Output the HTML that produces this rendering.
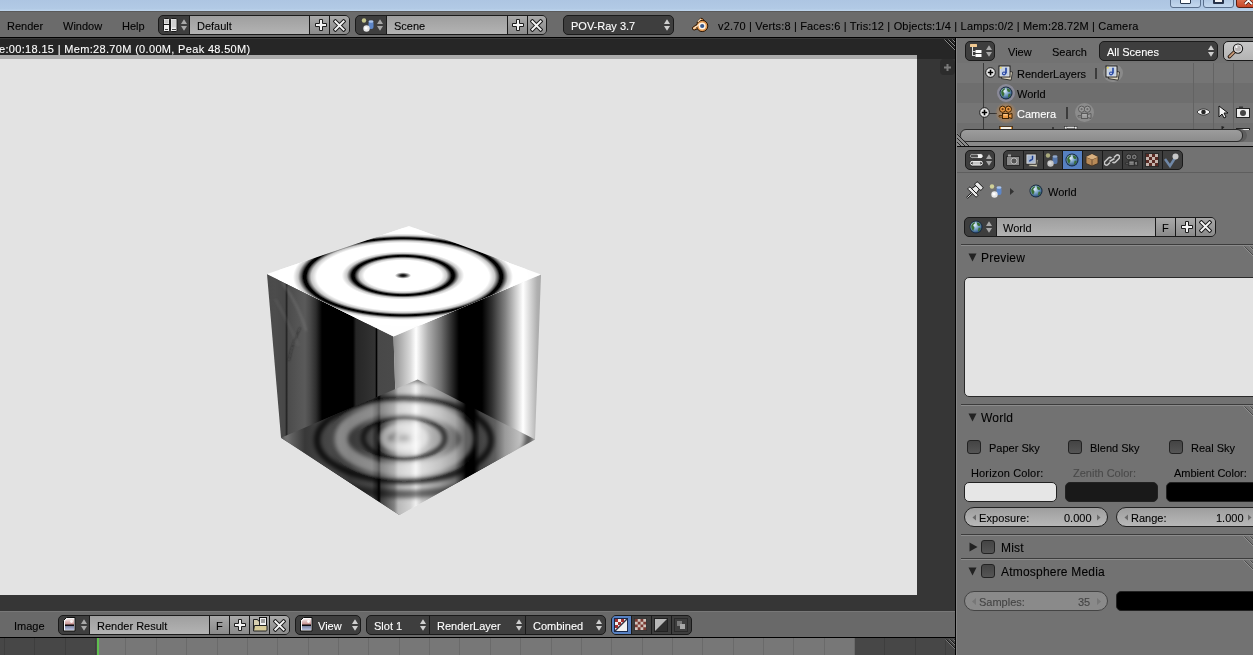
<!DOCTYPE html>
<html><head><meta charset="utf-8">
<style>
*{box-sizing:border-box;margin:0;padding:0}
html,body{width:1253px;height:655px;overflow:hidden;background:#6c6c6c}
body{position:relative;font-family:"Liberation Sans",sans-serif;font-size:11px;color:#000}
.a{position:absolute}
.t{position:absolute;height:20px;line-height:20px;font-size:11px;white-space:pre;-webkit-text-stroke:0.1px currentColor;will-change:transform}
.w{color:#fff}
.dd{position:absolute;border:1px solid #1e1e1e;border-radius:4px;background:#3f3f3f}
.tf{position:absolute;background:linear-gradient(#a2a2a2,#b9b9b9);border-top:1px solid #1e1e1e;border-bottom:1px solid #1e1e1e}
.tb{position:absolute;background:linear-gradient(#9a9a9a,#858585);border:1px solid #1e1e1e}

.grp{position:absolute;border:1px solid #1a1a1a;border-radius:5px;overflow:hidden;background:#3e3e3e}
.grp>div{position:absolute;top:0;bottom:0}
.sf{background:linear-gradient(#9f9f9f,#b3b3b3);border-left:1px solid #1a1a1a}
.sb{background:linear-gradient(#a9a9a9,#8a8a8a);border-left:1px solid #1a1a1a}
.sd{border-left:1px solid #1a1a1a}
.ico{position:absolute}
.arr{position:absolute;width:6px;height:13px}
</style></head><body>
<svg width="0" height="0" style="position:absolute">
<defs>
<path id="plus" d="M4.5 0.5h3v4h4v3h-4v4h-3v-4h-4v-3h4z" fill="#f4f4f4" stroke="#1c1c1c" stroke-width="1"/>
<g id="xx"><path d="M2.4 2.4L10.6 10.6M10.6 2.4L2.4 10.6" stroke="#1c1c1c" stroke-width="4" stroke-linecap="square"/><path d="M2.4 2.4L10.6 10.6M10.6 2.4L2.4 10.6" stroke="#f4f4f4" stroke-width="2" stroke-linecap="square"/></g>
<g id="ud"><path d="M3 0.2L6 5H0z" fill="#a8a8a8"/><path d="M0 7H6L3 11.8z" fill="#a8a8a8"/></g>
<g id="ud2"><path d="M3 0.2L6 5H0z" fill="#cfcfcf"/><path d="M0 7H6L3 11.8z" fill="#cfcfcf"/></g>
<radialGradient id="gGlobe" cx="0.38" cy="0.32" r="0.7"><stop offset="0" stop-color="#e4f0fa"/><stop offset="0.5" stop-color="#80a8cc"/><stop offset="1" stop-color="#2e5482"/></radialGradient>
<g id="globe"><circle cx="7" cy="7" r="6.5" fill="#17283c"/><circle cx="7" cy="7" r="5.6" fill="url(#gGlobe)"/><path d="M2.2 5.5c.8-1.8 2.2-3 3.6-3.2.6.6 0 1.6-.8 2-.9.5-1 1.5-.2 2.2.8.7.9 1.8.1 2.8-.4.5-.6 1.2-.6 1.8C3 10 2 7.8 2.2 5.5zM7.6 2.2c1.8.1 3.3 1.1 4 2.6-.2.9-1 1.2-1.8 1.2-.9-.1-1.5-.6-1.6-1.4 0-.7-.4-1.4-.6-2.4zM9.6 7.8c.9-.3 1.9.1 2.1.8-.3 1.4-1.1 2.5-2.2 3.1-.6-.4-.5-1.2-.3-1.9.2-.6.1-1.4.4-2z" fill="#3a6e36"/></g>
<linearGradient id="gImg" x1="0" y1="0" x2="0" y2="1"><stop offset="0" stop-color="#f4e8e8"/><stop offset="0.48" stop-color="#c89090"/><stop offset="0.52" stop-color="#100808"/><stop offset="0.6" stop-color="#101018"/><stop offset="0.68" stop-color="#8088a8"/><stop offset="1" stop-color="#b8c0dc"/></linearGradient>
<g id="imgico"><path d="M3.5 0.5h8.5v13.5H0.5V3.5z" fill="#f8f8f8" stroke="#111"/><path d="M4 2h7v11H2V4z" fill="url(#gImg)"/><circle cx="8.5" cy="4.5" r="1.4" fill="#fff" opacity="0.85"/></g>
<g id="scn"><circle cx="3" cy="2.5" r="2.2" fill="#e8e8a0" opacity="0.8"/><rect x="7.5" y="3" width="5" height="8" rx="2" fill="#5d86c8"/><ellipse cx="10" cy="3.5" rx="2.5" ry="1.2" fill="#a8c4ee"/><circle cx="5.5" cy="10.5" r="3.2" fill="#e6e6e6"/><circle cx="5" cy="10" r="1.6" fill="#fff"/></g>
</defs></svg>


<!-- title bar -->
<div class="a" style="left:0;top:0;width:1253px;height:11px;background:linear-gradient(#adc5e2,#b2cae5 80%,#c0d6ee)"></div>

<!-- top header -->
<div class="a" style="left:0;top:11px;width:1253px;height:26px;background:#6b6b6b;border-top:1px solid #5a5a5a"></div>
<div class="a" style="left:0;top:37px;width:1253px;height:1px;background:#000"></div>
<div class="t" style="left:7px;top:16px">Render</div>
<div class="t" style="left:63px;top:16px">Window</div>
<div class="t" style="left:122px;top:16px">Help</div>


<!-- layout widget -->
<div class="grp" style="left:158px;top:15px;width:192px;height:20px">
 <div class="sf" style="left:30px;width:121px"></div>
 <div class="sb" style="left:150px;width:21px"></div>
 <div class="sb" style="left:170px;width:21px"></div>
</div>
<svg class="ico" style="left:163px;top:18px" width="15" height="14"><rect x="0.5" y="0.5" width="6" height="13" rx="1" fill="#f0f0f0" stroke="#1a1a1a"/><rect x="7.5" y="0.5" width="6.5" height="13" rx="1" fill="#f0f0f0" stroke="#1a1a1a"/><path d="M0.5 6.5h6" stroke="#1a1a1a"/><rect x="1.5" y="1.5" width="4" height="4" fill="#c8c8c8"/><rect x="8.5" y="1.5" width="4.5" height="8" fill="#d0d0d0"/><rect x="2" y="11" width="3" height="1" fill="#444"/><rect x="9" y="11" width="4" height="1" fill="#444"/></svg>
<svg class="arr" style="left:181px;top:19px"><use href="#ud"/></svg>
<div class="t" style="left:197px;top:16px">Default</div>
<svg class="ico" style="left:315px;top:19px" width="12" height="12"><use href="#plus"/></svg>
<svg class="ico" style="left:333px;top:19px" width="13" height="13"><use href="#xx"/></svg>

<!-- scene widget -->
<div class="grp" style="left:355px;top:15px;width:192px;height:20px">
 <div class="sf" style="left:30px;width:122px"></div>
 <div class="sb" style="left:151px;width:21px"></div>
 <div class="sb" style="left:171px;width:21px"></div>
</div>
<svg class="ico" style="left:361px;top:18px" width="14" height="14"><use href="#scn"/></svg>
<svg class="arr" style="left:377px;top:19px"><use href="#ud"/></svg>
<div class="t" style="left:394px;top:16px">Scene</div>
<svg class="ico" style="left:512px;top:19px" width="12" height="12"><use href="#plus"/></svg>
<svg class="ico" style="left:530px;top:19px" width="13" height="13"><use href="#xx"/></svg>

<!-- render engine -->
<div class="grp" style="left:563px;top:15px;width:111px;height:20px"></div>
<div class="t w" style="left:571px;top:16px">POV-Ray 3.7</div>
<svg class="arr" style="left:664px;top:19px"><use href="#ud2"/></svg>

<!-- blender logo -->
<svg class="ico" style="left:691px;top:17px" width="19" height="16" viewBox="0 0 19 16"><g stroke="#2a1606" stroke-width="1" stroke-linejoin="round" fill="#e49a52"><path d="M5.8 5.2L9.6 1.2 11.6 1.6 13.8 4.6z"/><path d="M9.6 4.6L1.4 10.6 1.8 12.6 3.4 13 10.4 10.4z"/><circle cx="11.2" cy="9" r="5.6"/></g><path d="M6.8 4.9L9.9 1.9M2.4 11.8L9.2 6.4" stroke="#fde2c0" stroke-width="1.3"/><circle cx="11.2" cy="9" r="3.5" fill="#fff6ea"/><circle cx="11.2" cy="9" r="2.1" fill="#3a5a8e"/></svg>
<div class="t" style="left:718px;top:16px;letter-spacing:0.17px">v2.70 | Verts:8 | Faces:6 | Tris:12 | Objects:1/4 | Lamps:0/2 | Mem:28.72M | Camera</div>

<!-- window buttons -->
<div class="a" style="left:1170px;top:-4px;width:31px;height:12px;border:1px solid #5a6f8c;border-radius:3px;background:linear-gradient(#a9c1de,#c4d8ee)"></div>
<div class="a" style="left:1180px;top:-2px;width:11px;height:6px;border:1px solid #2a3a50;border-radius:1px;background:#fff"></div>
<div class="a" style="left:1203px;top:-4px;width:31px;height:12px;border:1px solid #5a6f8c;border-radius:3px;background:linear-gradient(#a9c1de,#c4d8ee)"></div>
<div class="a" style="left:1213px;top:-4px;width:11px;height:8px;border:2px solid #26324a;border-top-width:4px;border-radius:1px;background:#f4f4f4"></div>
<div class="a" style="left:1236px;top:-4px;width:30px;height:12px;border:1px solid #5a1e10;border-radius:3px;background:linear-gradient(#e07a5a,#c8482a)"></div>
<svg class="ico" style="left:1244px;top:-3px" width="9" height="9"><path d="M1 0L8 7M8 0L1 7" stroke="#4a1a10" stroke-width="3.2"/><path d="M1 0L8 7M8 0L1 7" stroke="#fff" stroke-width="1.8"/></svg>

<!-- image editor area -->
<div class="a" style="left:0;top:38px;width:955px;height:573px;background:#363636"></div>
<div class="a" style="left:0;top:38px;width:955px;height:21px;background:#262626"></div>
<div class="a" style="left:0;top:59px;width:917px;height:536px;background:#e3e3e3"></div>
<div class="a" style="left:0;top:55px;width:917px;height:4px;background:#ababab"></div>
<div class="t w" style="left:-1px;top:39px;letter-spacing:0.33px">e:00:18.15 | Mem:28.70M (0.00M, Peak 48.50M)</div>


<!-- cube -->
<svg class="a" style="left:250px;top:215px" width="300" height="310" viewBox="250 215 300 310">
<defs>
<linearGradient id="gL" gradientUnits="userSpaceOnUse" x1="267" y1="0" x2="393.5" y2="0"><stop offset="0.000" stop-color="#4a4a4a"/><stop offset="0.063" stop-color="#4c4c4c"/><stop offset="0.142" stop-color="#474747"/><stop offset="0.154" stop-color="#262626"/><stop offset="0.170" stop-color="#4c4c4c"/><stop offset="0.245" stop-color="#555"/><stop offset="0.300" stop-color="#5a5a5a"/><stop offset="0.340" stop-color="#4a4a4a"/><stop offset="0.387" stop-color="#2e2e2e"/><stop offset="0.435" stop-color="#000"/><stop offset="0.680" stop-color="#000"/><stop offset="0.704" stop-color="#262626"/><stop offset="0.854" stop-color="#333"/><stop offset="0.866" stop-color="#000"/><stop offset="0.877" stop-color="#484848"/><stop offset="1.000" stop-color="#4a4a4a"/></linearGradient>
<linearGradient id="gR" gradientUnits="userSpaceOnUse" x1="393.5" y1="0" x2="541" y2="0"><stop offset="0.000" stop-color="#909090"/><stop offset="0.112" stop-color="#d8d8d8"/><stop offset="0.153" stop-color="#fff"/><stop offset="0.234" stop-color="#b0b0b0"/><stop offset="0.322" stop-color="#707070"/><stop offset="0.390" stop-color="#303030"/><stop offset="0.444" stop-color="#000"/><stop offset="0.600" stop-color="#000"/><stop offset="0.668" stop-color="#303030"/><stop offset="0.756" stop-color="#808080"/><stop offset="0.824" stop-color="#c8c8c8"/><stop offset="0.878" stop-color="#fff"/><stop offset="0.973" stop-color="#b0b0b0"/><stop offset="1.000" stop-color="#a8a8a8"/></linearGradient>
<filter id="b1" x="-20%" y="-20%" width="140%" height="140%"><feGaussianBlur stdDeviation="1.1"/></filter>
<filter id="b2" x="-20%" y="-20%" width="140%" height="140%"><feGaussianBlur stdDeviation="2"/></filter>
<filter id="b3" x="-20%" y="-20%" width="140%" height="140%"><feGaussianBlur stdDeviation="3"/></filter>
<radialGradient id="gTop" gradientUnits="userSpaceOnUse" cx="403" cy="276.8" r="125" gradientTransform="translate(0 276.8) scale(1 0.392) translate(0 -276.8)"><stop offset="0" stop-color="#fff"/><stop offset="0.69" stop-color="#fff"/><stop offset="0.735" stop-color="#c8c8c8"/><stop offset="0.762" stop-color="#505050"/><stop offset="0.776" stop-color="#000"/><stop offset="0.796" stop-color="#000"/><stop offset="0.812" stop-color="#505050"/><stop offset="0.84" stop-color="#c8c8c8"/><stop offset="0.88" stop-color="#fff"/><stop offset="1" stop-color="#fff"/></radialGradient>
<radialGradient id="gTopI" gradientUnits="userSpaceOnUse" cx="403" cy="275.5" r="62.5" gradientTransform="translate(0 275.5) scale(1 0.392) translate(0 -275.5)"><stop offset="0" stop-color="#0a0a0a"/><stop offset="0.035" stop-color="#1a1a1a"/><stop offset="0.08" stop-color="#8a8a8a"/><stop offset="0.13" stop-color="#fff"/><stop offset="0.62" stop-color="#fff"/><stop offset="0.7" stop-color="#c8c8c8"/><stop offset="0.75" stop-color="#505050"/><stop offset="0.78" stop-color="#000"/><stop offset="0.82" stop-color="#000"/><stop offset="0.85" stop-color="#505050"/><stop offset="0.9" stop-color="#c8c8c8"/><stop offset="0.98" stop-color="#fff"/><stop offset="1" stop-color="#fff"/></radialGradient>
<filter id="b07" x="-10%" y="-10%" width="120%" height="120%"><feGaussianBlur stdDeviation="0.7"/></filter>
<linearGradient id="gBot" gradientUnits="userSpaceOnUse" x1="281" y1="0" x2="535" y2="0"><stop offset="0.000" stop-color="#8a8a8a"/><stop offset="0.043" stop-color="#606060"/><stop offset="0.094" stop-color="#383838"/><stop offset="0.193" stop-color="#484848"/><stop offset="0.272" stop-color="#383838"/><stop offset="0.358" stop-color="#484848"/><stop offset="0.378" stop-color="#202020"/><stop offset="0.386" stop-color="#000"/><stop offset="0.394" stop-color="#404040"/><stop offset="0.445" stop-color="#808080"/><stop offset="0.461" stop-color="#b8b8b8"/><stop offset="0.508" stop-color="#d0d0d0"/><stop offset="0.531" stop-color="#f0f0f0"/><stop offset="0.555" stop-color="#c8c8c8"/><stop offset="0.626" stop-color="#a0a0a0"/><stop offset="0.685" stop-color="#707070"/><stop offset="0.717" stop-color="#202020"/><stop offset="0.728" stop-color="#000"/><stop offset="0.760" stop-color="#000"/><stop offset="0.783" stop-color="#404040"/><stop offset="0.843" stop-color="#606060"/><stop offset="0.882" stop-color="#9a9a9a"/><stop offset="0.941" stop-color="#c0c0c0"/><stop offset="1.000" stop-color="#b0b0b0"/></linearGradient>
<clipPath id="cLf"><path d="M267 274L393.5 336.5 399.4 515.1 281 437.7z"/></clipPath>
<clipPath id="cT"><path d="M409 226L541 274.5 393.5 336.5 267 274z"/></clipPath>
<clipPath id="cB"><path d="M281 437.7L417.7 379.5 535 439.4 399.4 515.1z"/></clipPath>
</defs>
<path d="M267 274L393.5 336.5 399.4 515.1 281 437.7z" fill="url(#gL)"/>
<path d="M393.5 336.5L541 274.5 535 439.4 399.4 515.1z" fill="url(#gR)"/>
<g clip-path="url(#cLf)" filter="url(#b1)" fill="none" stroke-linecap="round">
 <path d="M283 283C292 296 300 310 306 330" stroke="#808080" stroke-width="2.5" opacity="0.35"/>
 <path d="M276 300C284 315 292 330 298 345" stroke="#707070" stroke-width="2.2" opacity="0.3"/>
 <path d="M300 328C295 338 291 348 289 360" stroke="#1a1a1a" stroke-width="1.6" opacity="0.45"/>
</g>

<g clip-path="url(#cB)">
 <rect x="250" y="370" width="300" height="150" fill="url(#gBot)"/>
 <g filter="url(#b2)">
  <ellipse cx="404" cy="439" rx="63" ry="31" fill="none" stroke="#fff" stroke-width="13" opacity="0.38"/>
  <ellipse cx="404" cy="438" rx="20" ry="11" fill="none" stroke="#fff" stroke-width="9" opacity="0.5"/>
  <ellipse cx="404" cy="440" rx="87" ry="41" fill="none" stroke="#000" stroke-width="6" opacity="0.8"/>
  <ellipse cx="404" cy="438" rx="41" ry="21" fill="none" stroke="#000" stroke-width="4" opacity="0.85"/>
  <ellipse cx="406" cy="440" rx="14" ry="9" fill="#fff" opacity="0.35"/><ellipse cx="404" cy="438" rx="6" ry="3.5" fill="#666" opacity="0.3"/>
  <ellipse cx="404" cy="436" rx="125" ry="58" fill="none" stroke="#000" stroke-width="8" opacity="0.5"/>
 </g>
</g>
<g clip-path="url(#cT)">
 <rect x="250" y="215" width="300" height="130" fill="#fefefe"/>
 <g filter="url(#b07)"><ellipse cx="403" cy="276.8" rx="125" ry="49" fill="url(#gTop)"/><ellipse cx="403" cy="275.5" rx="62.5" ry="24.5" fill="url(#gTopI)"/></g>
</g>
</svg>

<div class="a" style="left:0;top:38px;width:955px;height:1px;background:#383838"></div>
<!-- image editor header -->
<div class="a" style="left:0;top:611px;width:955px;height:26px;background:#696969;border-top:1px solid #787878"></div>
<div class="a" style="left:0;top:637px;width:955px;height:1px;background:#000"></div>
<div class="t" style="left:14px;top:616px">Image</div>

<!-- timeline -->
<div class="a" style="left:0;top:638px;width:955px;height:17px;background:#474747"></div>
<div class="a" style="left:97px;top:638px;width:757px;height:17px;background:#777777"></div>
<div class="a" style="left:97px;top:638px;width:2px;height:17px;background:#5fbf4f"></div>


<!-- image header widgets -->
<div class="grp" style="left:58px;top:615px;width:232px;height:20px">
 <div class="sf" style="left:30px;width:121px"></div>
 <div class="sb" style="left:150px;width:21px"></div>
 <div class="sb" style="left:170px;width:21px"></div>
 <div class="sb" style="left:190px;width:21px"></div>
 <div class="sb" style="left:210px;width:21px"></div>
</div>
<svg class="ico" style="left:63px;top:617px" width="14" height="16"><use href="#imgico"/></svg>
<svg class="arr" style="left:81px;top:619px"><use href="#ud"/></svg>
<div class="t" style="left:97px;top:616px">Render Result</div>
<div class="t" style="left:216px;top:616px">F</div>
<svg class="ico" style="left:234px;top:619px" width="12" height="12"><use href="#plus"/></svg>
<svg class="ico" style="left:252px;top:617px" width="16" height="15" viewBox="0 0 16 15"><rect x="7.5" y="0.5" width="7" height="8" fill="#f0f0f0" stroke="#111"/><path d="M9 3h4M9 5h4" stroke="#444"/><path d="M1.5 2.5h4l1 1.5h1v9h-6z" fill="#d8d0b0" stroke="#222"/><path d="M2.5 8.5h12.5v4.5c0 .6-.4 1-1 1h-12.5z" fill="#d8cc98" stroke="#222"/></svg>
<svg class="ico" style="left:273px;top:619px" width="13" height="13"><use href="#xx"/></svg>

<div class="grp" style="left:295px;top:615px;width:66px;height:20px"></div>
<svg class="ico" style="left:300px;top:617px" width="14" height="16"><use href="#imgico"/></svg>
<div class="t w" style="left:318px;top:616px">View</div>
<svg class="arr" style="left:352px;top:619px"><use href="#ud2"/></svg>

<div class="grp" style="left:366px;top:615px;width:240px;height:20px">
 <div class="sd" style="left:62px;width:97px"></div>
 <div class="sd" style="left:158px;width:81px"></div>
</div>
<div class="t w" style="left:374px;top:616px">Slot 1</div>
<svg class="arr" style="left:420px;top:619px"><use href="#ud2"/></svg>
<div class="t w" style="left:437px;top:616px">RenderLayer</div>
<svg class="arr" style="left:516px;top:619px"><use href="#ud2"/></svg>
<div class="t w" style="left:533px;top:616px">Combined</div>
<svg class="arr" style="left:596px;top:619px"><use href="#ud2"/></svg>

<div class="grp" style="left:611px;top:615px;width:81px;height:20px">
 <div style="left:0;width:20px;background:#5680c2"></div>
 <div class="sd" style="left:19px;width:21px"></div>
 <div class="sd" style="left:39px;width:21px"></div>
 <div class="sd" style="left:59px;width:21px"></div>
</div>
<svg class="ico" style="left:614px;top:618px" width="14" height="14" viewBox="0 0 14 14"><rect x="0.5" y="0.5" width="13" height="13" fill="#f0f0f0" stroke="#1a2a4a"/><path d="M1 13L13 1" stroke="#334" stroke-width="1.5"/><path d="M1 1h3v3H1zM7 1h3v3H7zM4 4h3v3H4zM1 7h3v3H1z" fill="#a03030"/></svg>
<svg class="ico" style="left:634px;top:618px" width="13" height="13" viewBox="0 0 14 14"><rect x="0.5" y="0.5" width="13" height="13" fill="#d0c4bc" stroke="#333"/><path d="M1 1h3v3H1zM7 1h3v3H7zM4 4h3v3H4zM10 4h3v3h-3zM1 7h3v3H1zM7 7h3v3H7zM4 10h3v3H4zM10 10h3v3h-3z" fill="#7a3a32"/></svg>
<svg class="ico" style="left:654px;top:618px" width="14" height="14" viewBox="0 0 14 14"><rect x="0.5" y="0.5" width="13" height="13" fill="#303030" stroke="#222"/><path d="M1 13L13 1V13z" fill="#303030"/><path d="M1 1h12L1 13z" fill="#b8b8b8"/></svg>
<svg class="ico" style="left:674px;top:618px" width="14" height="14" viewBox="0 0 14 14"><rect x="0.5" y="0.5" width="13" height="13" fill="none" stroke="#2a2a2a"/><rect x="3" y="3" width="5" height="5" fill="#7a7a7a"/><rect x="6" y="6" width="5" height="5" fill="#a8a8a8"/></svg>

<!-- timeline lines -->
<div class="a" style="left:915px;top:638px;width:1px;height:17px;background:#3e3e3e"></div>
<div class="a" style="left:945px;top:638px;width:1px;height:17px;background:#3e3e3e"></div>

<div class="a" style="left:4px;top:638px;width:1px;height:17px;background:#3e3e3e"></div>
<div class="a" style="left:4px;top:638px;width:1px;height:17px;background:#3e3e3e"></div>
<div class="a" style="left:34px;top:638px;width:1px;height:17px;background:#3e3e3e"></div>
<div class="a" style="left:65px;top:638px;width:1px;height:17px;background:#3e3e3e"></div>
<div class="a" style="left:95px;top:638px;width:1px;height:17px;background:#3e3e3e"></div>
<div class="a" style="left:125px;top:638px;width:1px;height:17px;background:#6a6a6a"></div>
<div class="a" style="left:156px;top:638px;width:1px;height:17px;background:#6a6a6a"></div>
<div class="a" style="left:186px;top:638px;width:1px;height:17px;background:#6a6a6a"></div>
<div class="a" style="left:217px;top:638px;width:1px;height:17px;background:#6a6a6a"></div>
<div class="a" style="left:247px;top:638px;width:1px;height:17px;background:#6a6a6a"></div>
<div class="a" style="left:277px;top:638px;width:1px;height:17px;background:#6a6a6a"></div>
<div class="a" style="left:308px;top:638px;width:1px;height:17px;background:#6a6a6a"></div>
<div class="a" style="left:338px;top:638px;width:1px;height:17px;background:#6a6a6a"></div>
<div class="a" style="left:368px;top:638px;width:1px;height:17px;background:#6a6a6a"></div>
<div class="a" style="left:399px;top:638px;width:1px;height:17px;background:#6a6a6a"></div>
<div class="a" style="left:429px;top:638px;width:1px;height:17px;background:#6a6a6a"></div>
<div class="a" style="left:459px;top:638px;width:1px;height:17px;background:#6a6a6a"></div>
<div class="a" style="left:490px;top:638px;width:1px;height:17px;background:#6a6a6a"></div>
<div class="a" style="left:520px;top:638px;width:1px;height:17px;background:#6a6a6a"></div>
<div class="a" style="left:551px;top:638px;width:1px;height:17px;background:#6a6a6a"></div>
<div class="a" style="left:581px;top:638px;width:1px;height:17px;background:#6a6a6a"></div>
<div class="a" style="left:611px;top:638px;width:1px;height:17px;background:#6a6a6a"></div>
<div class="a" style="left:642px;top:638px;width:1px;height:17px;background:#6a6a6a"></div>
<div class="a" style="left:672px;top:638px;width:1px;height:17px;background:#6a6a6a"></div>
<div class="a" style="left:702px;top:638px;width:1px;height:17px;background:#6a6a6a"></div>
<div class="a" style="left:733px;top:638px;width:1px;height:17px;background:#6a6a6a"></div>
<div class="a" style="left:763px;top:638px;width:1px;height:17px;background:#6a6a6a"></div>
<div class="a" style="left:793px;top:638px;width:1px;height:17px;background:#6a6a6a"></div>
<div class="a" style="left:824px;top:638px;width:1px;height:17px;background:#6a6a6a"></div>
<div class="a" style="left:854px;top:638px;width:1px;height:17px;background:#6a6a6a"></div>
<div class="a" style="left:884px;top:638px;width:1px;height:17px;background:#3e3e3e"></div>

<!-- image editor + -->
<div class="a" style="left:940px;top:59px;width:15px;height:16px;border-radius:4px;background:#2c2c2c"></div>
<svg class="ico" style="left:944px;top:64px" width="7" height="7"><path d="M2.5 0h2v2.5H7v2H4.5V7h-2V4.5H0v-2h2.5z" fill="#7a7a7a"/></svg>

<!-- separator -->
<div class="a" style="left:955px;top:37px;width:1px;height:618px;background:#000"></div>

<!-- outliner -->
<div class="a" style="left:956px;top:38px;width:297px;height:25px;background:#727272"></div>
<div class="a" style="left:956px;top:63px;width:297px;height:82px;background:#717171"></div>
<div class="t" style="left:1008px;top:42px">View</div>
<div class="t" style="left:1052px;top:42px">Search</div>


<!-- outliner widgets -->
<div class="grp" style="left:965px;top:41px;width:30px;height:20px"></div>
<svg class="ico" style="left:969px;top:43px" width="16" height="16" viewBox="0 0 16 16"><rect x="1" y="1" width="7" height="3" rx="0.5" fill="#f0c890"/><path d="M3.5 4v9M3.5 8.5h3M3.5 12.5h3" stroke="#ddd" stroke-width="1"/><rect x="6.5" y="7" width="6" height="3" fill="#fff"/><rect x="6.5" y="11" width="6" height="3" fill="#fff"/></svg>
<svg class="arr" style="left:986px;top:45px"><use href="#ud"/></svg>
<div class="grp" style="left:1099px;top:41px;width:119px;height:20px"></div>
<div class="t w" style="left:1107px;top:42px">All Scenes</div>
<svg class="arr" style="left:1208px;top:45px"><use href="#ud2"/></svg>
<div class="a" style="left:1223px;top:41px;width:40px;height:20px;border:1px solid #1a1a1a;border-radius:5px;background:linear-gradient(#c6c6c6,#b4b4b4)"></div>
<svg class="ico" style="left:1227px;top:43px" width="18" height="16" viewBox="0 0 18 16"><path d="M7.6 8.6L2.4 13.8" stroke="#2a1a10" stroke-width="3.4" stroke-linecap="round"/><path d="M7.4 8.8L2.6 13.6" stroke="#c89a78" stroke-width="1.8" stroke-linecap="round"/><circle cx="11" cy="5.6" r="4.6" fill="#b8b4b4" stroke="#111" stroke-width="1.1"/><circle cx="11" cy="5.6" r="3.6" fill="none" stroke="#eee" stroke-width="0.8"/><circle cx="9.6" cy="4" r="1" fill="#fff"/></svg>

<!-- outliner rows -->
<div class="a" style="left:956px;top:63px;width:297px;height:20px;background:#757575"></div>
<div class="a" style="left:956px;top:83px;width:297px;height:20px;background:#6e6e6e"></div>
<div class="a" style="left:956px;top:103px;width:297px;height:20px;background:#757575"></div>
<div class="a" style="left:956px;top:123px;width:297px;height:19px;background:#6f6f6f"></div>
<div class="a" style="left:956px;top:142px;width:297px;height:4px;background:#8a8a8a"></div>
<div class="a" style="left:983px;top:63px;width:1px;height:70px;background:#3a3a3a"></div>
<div class="a" style="left:1193px;top:63px;width:1px;height:70px;background:#636363"></div>
<div class="a" style="left:1213px;top:63px;width:1px;height:70px;background:#636363"></div>
<div class="a" style="left:1233px;top:63px;width:1px;height:70px;background:#636363"></div>
<svg class="ico" style="left:985px;top:67px" width="11" height="11"><circle cx="5.5" cy="5.5" r="4.8" fill="#e8e8e8" stroke="#1a1a1a" stroke-width="1"/><path d="M2.8 5.5h5.4M5.5 2.8v5.4" stroke="#000" stroke-width="1.6"/></svg>
<svg class="ico" style="left:979px;top:107px" width="11" height="11"><circle cx="5.5" cy="5.5" r="4.8" fill="#e8e8e8" stroke="#1a1a1a" stroke-width="1"/><path d="M2.8 5.5h5.4M5.5 2.8v5.4" stroke="#000" stroke-width="1.6"/></svg>
<div class="a" style="left:989px;top:113px;width:8px;height:1px;background:#333"></div>
<svg class="ico" style="left:998px;top:65px" width="16" height="16" viewBox="0 0 16 16"><path d="M4.5 5.5l10 1.5-1.4 8.2-9.6-1.6z" fill="#e4dcc4" stroke="#2a2a2a" stroke-width="0.9"/><rect x="1" y="1" width="11" height="11" fill="#f6f6f6" stroke="#1a1a1a" stroke-width="1"/><rect x="2.2" y="2.2" width="8.6" height="8.6" fill="#c4d0e0"/><path d="M8 2.8v5.6" stroke="#2040a0" stroke-width="1.6"/><circle cx="6" cy="8.4" r="2" fill="#2040a0"/><circle cx="6" cy="8.4" r="0.8" fill="#e8eef8"/><circle cx="2.8" cy="2.8" r="1" fill="#e8d860"/></svg>
<div class="t" style="left:1017px;top:64px">RenderLayers</div>
<div class="a" style="left:1095px;top:68px;width:2px;height:11px;background:#3c3c3c"></div>
<div class="a" style="left:1103px;top:64px;width:20px;height:18px;border-radius:9px;background:#8a8a8a"></div>
<svg class="ico" style="left:1105px;top:65px" width="16" height="16" viewBox="0 0 16 16"><path d="M4.5 5.5l10 1.5-1.4 8.2-9.6-1.6z" fill="#e4dcc4" stroke="#2a2a2a" stroke-width="0.9"/><rect x="1" y="1" width="11" height="11" fill="#f6f6f6" stroke="#1a1a1a" stroke-width="1"/><rect x="2.2" y="2.2" width="8.6" height="8.6" fill="#c4d0e0"/><path d="M8 2.8v5.6" stroke="#2040a0" stroke-width="1.6"/><circle cx="6" cy="8.4" r="2" fill="#2040a0"/><circle cx="6" cy="8.4" r="0.8" fill="#e8eef8"/><circle cx="2.8" cy="2.8" r="1" fill="#e8d860"/></svg>
<div class="a" style="left:997px;top:84px;width:18px;height:18px;border-radius:9px;background:#8a8a98"></div>
<svg class="ico" style="left:999px;top:86px" width="14" height="14"><use href="#globe"/></svg>
<div class="t" style="left:1017px;top:84px">World</div>
<div class="a" style="left:995px;top:102px;width:22px;height:22px;border-radius:11px;background:radial-gradient(rgba(235,150,60,0.75),rgba(200,140,80,0.35) 55%,rgba(114,114,114,0) 72%)"></div>
<svg class="ico" style="left:998px;top:105px" width="16" height="16" viewBox="0 0 16 16"><circle cx="4.6" cy="4.2" r="3.1" fill="#eb9a45" stroke="#3a2206" stroke-width="1"/><circle cx="10.4" cy="4.2" r="3.1" fill="#eb9a45" stroke="#3a2206" stroke-width="1"/><circle cx="4.6" cy="4.2" r="1.1" fill="#6a3a10"/><circle cx="10.4" cy="4.2" r="1.1" fill="#6a3a10"/><rect x="4.5" y="8.5" width="6" height="5" fill="#eb9a45" stroke="#3a2206" stroke-width="1"/><path d="M10.5 9.5l3.5-1v5l-3.5-1z" fill="#eb9a45" stroke="#3a2206" stroke-width="1"/><path d="M1 10.5h3.5v1.5H1z" fill="#eb9a45" stroke="#3a2206" stroke-width="0.8"/><path d="M5.5 9.8h4" stroke="#fbd9a8" stroke-width="1"/></svg>
<div class="t w" style="left:1017px;top:104px">Camera</div>
<div class="a" style="left:1066px;top:107px;width:2px;height:12px;background:#3c3c3c"></div>
<div class="a" style="left:1075px;top:103px;width:19px;height:19px;border-radius:10px;background:#8c8c8c"></div>
<svg class="ico" style="left:1077px;top:105px" width="16" height="16" viewBox="0 0 16 16" opacity="0.6"><circle cx="4.6" cy="4.2" r="3.1" fill="#a8a8a8" stroke="#3a3a3a" stroke-width="1"/><circle cx="10.4" cy="4.2" r="3.1" fill="#a8a8a8" stroke="#3a3a3a" stroke-width="1"/><circle cx="4.6" cy="4.2" r="1.1" fill="#555"/><circle cx="10.4" cy="4.2" r="1.1" fill="#555"/><rect x="4.5" y="8.5" width="6" height="5" fill="#a8a8a8" stroke="#3a3a3a" stroke-width="1"/><path d="M10.5 9.5l3.5-1v5l-3.5-1z" fill="#a8a8a8" stroke="#3a3a3a" stroke-width="1"/><path d="M1 10.5h3.5v1.5H1z" fill="#a8a8a8" stroke="#3a3a3a" stroke-width="0.8"/><path d="M5.5 9.8h4" stroke="#d0d0d0" stroke-width="1"/></svg>
<svg class="ico" style="left:1196px;top:107px" width="15" height="10" viewBox="0 0 15 10"><path d="M1 5C4 1 11 1 14 5 11 9 4 9 1 5z" fill="#f4f4f4" stroke="#222" stroke-width="0.8"/><circle cx="7.5" cy="5" r="2.3" fill="#222"/></svg>
<svg class="ico" style="left:1218px;top:105px" width="10" height="14" viewBox="0 0 10 14"><path d="M1 1v11l3-3 2 4 2-1-2-4h4z" fill="#f4f4f4" stroke="#111" stroke-width="1"/></svg>
<svg class="ico" style="left:1236px;top:106px" width="14" height="12" viewBox="0 0 14 12"><rect x="0.5" y="2.5" width="13" height="9" fill="#eee" stroke="#222"/><circle cx="7" cy="7" r="3" fill="#444"/><rect x="3" y="0.5" width="4" height="2" fill="#333"/></svg>
<!-- partial row 4 -->
<svg class="ico" style="left:999px;top:125px" width="15" height="5"><rect x="0.5" y="1.5" width="13" height="4" fill="#e89a3a" stroke="#3a2a1a" stroke-width="0.8"/><rect x="2" y="2" width="10" height="2" fill="#f4f0e8"/></svg>
<div class="a" style="left:1052px;top:127px;width:2px;height:3px;background:#3c3c3c"></div>
<svg class="ico" style="left:1064px;top:125px" width="14" height="5"><rect x="0.5" y="1.5" width="2.5" height="2.5" fill="#eee" stroke="#333" stroke-width="0.6"/><rect x="10.5" y="1.5" width="2.5" height="2.5" fill="#eee" stroke="#333" stroke-width="0.6"/><path d="M3 2.5h7.5" stroke="#ddd"/></svg>
<svg class="ico" style="left:1221px;top:126px" width="6" height="4"><path d="M0.5 0v4l3-3z" fill="#222"/></svg>
<svg class="ico" style="left:1236px;top:126px" width="14" height="4"><rect x="0.5" y="2.5" width="13" height="3" fill="#eee" stroke="#222"/></svg>
<!-- scrollbar -->
<div class="a" style="left:1234px;top:129px;width:13px;height:13px;border-radius:0 7px 7px 0;background:#5e5e5e"></div>
<div class="a" style="left:960px;top:129px;width:283px;height:13px;border:1px solid #2a2a2a;border-radius:6px;background:linear-gradient(#9c9c9c,#8c8c8c)"></div>

<!-- properties -->
<div class="a" style="left:956px;top:146px;width:297px;height:1px;background:#0a0a0a"></div>
<div class="a" style="left:956px;top:147px;width:297px;height:25px;background:#727272"></div>
<div class="a" style="left:956px;top:172px;width:297px;height:483px;background:#727272;border-top:1px solid #5e5e5e"></div>


<!-- properties header -->
<div class="grp" style="left:965px;top:150px;width:30px;height:20px"></div>
<svg class="ico" style="left:969px;top:153px" width="15" height="15" viewBox="0 0 15 15"><rect x="0.8" y="0.6" width="13.4" height="5" rx="2.4" fill="#f2f2f2" stroke="#1a1a1a" stroke-width="0.8"/><rect x="1.8" y="1.6" width="7.2" height="3" rx="1.2" fill="#4e4e4e"/><rect x="0.8" y="7.4" width="13.4" height="5.6" rx="2.4" fill="#f2f2f2" stroke="#1a1a1a" stroke-width="0.8"/><rect x="3.8" y="8.8" width="7.4" height="2.8" fill="#c4c4c4"/><path d="M1.8 10.2l1.8-1.6v3.2zM13.2 10.2l-1.8-1.6v3.2z" fill="#111"/></svg>
<svg class="arr" style="left:986px;top:154px"><use href="#ud"/></svg>
<div class="grp" style="left:1003px;top:150px;width:180px;height:20px">
 <div class="sd" style="left:19px;width:20px"></div>
 <div class="sd" style="left:39px;width:20px"></div>
 <div style="left:58px;width:20px;background:#5680c2;border-left:1px solid #1a1a1a"></div>
 <div class="sd" style="left:78px;width:20px"></div>
 <div class="sd" style="left:98px;width:20px"></div>
 <div class="sd" style="left:118px;width:20px"></div>
 <div class="sd" style="left:138px;width:20px"></div>
 <div class="sd" style="left:158px;width:21px"></div>
</div>
<!-- tab icons -->
<svg class="ico" style="left:1006px;top:153px" width="14" height="14" viewBox="0 0 14 14"><rect x="0.5" y="3.5" width="13" height="9" fill="#8a8a8a" stroke="#2a2a2a"/><circle cx="8" cy="8" r="3" fill="#555" stroke="#ccc" stroke-width="0.8"/><rect x="2" y="1.5" width="3" height="2" fill="#aaa"/></svg>
<svg class="ico" style="left:1025px;top:153px" width="15" height="15" viewBox="0 0 16 16"><path d="M4 6l10 1-1 8-9-1z" fill="#cfc9b0" stroke="#333" stroke-width="0.8"/><rect x="1" y="1" width="11" height="11" fill="#d8d8d8" stroke="#222" stroke-width="1"/><rect x="2.5" y="2.5" width="8" height="8" fill="#a8b8d0"/><path d="M5 9c0-2 3-1 3-3V3" stroke="#1f3f8f" stroke-width="1.5" fill="none"/></svg>
<svg class="ico" style="left:1045px;top:153px" width="14" height="14" opacity="0.8"><use href="#scn"/></svg>
<svg class="ico" style="left:1065px;top:153px" width="14" height="14"><use href="#globe"/></svg>
<svg class="ico" style="left:1085px;top:153px" width="14" height="14" viewBox="0 0 14 14"><path d="M7 1l6 3v6.5L7 13 1 10.5V4z" fill="#b88a58" stroke="#3a2a1a" stroke-width="0.8"/><path d="M1 4l6 2.5L13 4M7 6.5V13" stroke="#5a4028" stroke-width="0.8" fill="none"/><path d="M1 4l6-3 6 3-6 2.5z" fill="#d8b080"/></svg>
<svg class="ico" style="left:1104px;top:153px" width="16" height="14" viewBox="0 0 16 14"><path d="M6 9.5L4 11.5a2.1 2.1 0 0 1-3-3L4.5 5a2.1 2.1 0 0 1 3 0M10 4.5L12 2.5a2.1 2.1 0 0 1 3 3L11.5 9a2.1 2.1 0 0 1-3 0M5.5 8.5l5-3" stroke="#c8c8c8" stroke-width="1.6" fill="none"/></svg>
<svg class="ico" style="left:1124px;top:153px" width="16" height="15" viewBox="0 0 16 16" opacity="0.75"><circle cx="4.6" cy="4.2" r="3.1" fill="#8c8c8c" stroke="#1e1e1e" stroke-width="1"/><circle cx="10.4" cy="4.2" r="3.1" fill="#8c8c8c" stroke="#1e1e1e" stroke-width="1"/><circle cx="4.6" cy="4.2" r="1.1" fill="#333"/><circle cx="10.4" cy="4.2" r="1.1" fill="#333"/><rect x="4.5" y="8.5" width="6" height="5" fill="#8c8c8c" stroke="#1e1e1e" stroke-width="1"/><path d="M10.5 9.5l3.5-1v5l-3.5-1z" fill="#8c8c8c" stroke="#1e1e1e" stroke-width="1"/><path d="M1 10.5h3.5v1.5H1z" fill="#8c8c8c" stroke="#1e1e1e" stroke-width="0.8"/><path d="M5.5 9.8h4" stroke="#b0b0b0" stroke-width="1"/></svg>
<svg class="ico" style="left:1145px;top:153px" width="14" height="14" viewBox="0 0 14 14"><rect x="0.5" y="0.5" width="13" height="13" fill="#c4b4ac" stroke="#2a2a2a"/><path d="M1 1h3v3H1zM7 1h3v3H7zM4 4h3v3H4zM10 4h3v3h-3zM1 7h3v3H1zM7 7h3v3H7zM4 10h3v3H4zM10 10h3v3h-3z" fill="#5a2a24"/></svg>
<svg class="ico" style="left:1164px;top:152px" width="16" height="16" viewBox="0 0 16 16"><path d="M1 7l5 7 5-8" stroke="#7088a8" stroke-width="2.5" fill="none"/><circle cx="11.5" cy="4.5" r="3" fill="#c8c8c8"/></svg>

<!-- breadcrumb -->
<svg class="ico" style="left:964px;top:181px" width="20" height="20" viewBox="0 0 20 20"><g transform="rotate(45 10 10)" stroke="#111" stroke-width="0.9" fill="#e8e8e8"><path d="M10 12.5v7.5" stroke="#1a1a1a" stroke-width="2"/><path d="M10 12.5v7" stroke="#e0e0e0" stroke-width="0.9"/><rect x="4" y="10" width="12" height="3" rx="0.8"/><path d="M6.6 10L7.6 4.8h4.8l1 5.2z"/><rect x="5.6" y="1" width="8.8" height="4" rx="1"/><path d="M7 2.3h3" stroke="#fff" stroke-width="0.8"/></g></svg>
<svg class="ico" style="left:989px;top:184px" width="14" height="14"><use href="#scn"/></svg>
<svg class="ico" style="left:1010px;top:188px" width="4" height="7"><path d="M0 0l4 3.5L0 7z" fill="#333"/></svg>
<svg class="ico" style="left:1029px;top:184px" width="14" height="14"><use href="#globe"/></svg>
<div class="t" style="left:1048px;top:182px">World</div>

<!-- world ID -->
<div class="grp" style="left:964px;top:217px;width:252px;height:20px">
 <div class="sf" style="left:31px;width:160px"></div>
 <div class="sb" style="left:190px;width:21px"></div>
 <div class="sb" style="left:210px;width:21px"></div>
 <div class="sb" style="left:230px;width:21px"></div>
</div>
<svg class="ico" style="left:969px;top:220px" width="14" height="14"><use href="#globe"/></svg>
<svg class="arr" style="left:986px;top:221px"><use href="#ud"/></svg>
<div class="t" style="left:1003px;top:218px">World</div>
<div class="t" style="left:1162px;top:218px">F</div>
<svg class="ico" style="left:1181px;top:221px" width="12" height="12"><use href="#plus"/></svg>
<svg class="ico" style="left:1199px;top:220px" width="13" height="13"><use href="#xx"/></svg>

<!-- panel separators -->
<div class="a" style="left:961px;top:244px;width:292px;height:1px;background:#3c3c3c"></div>
<div class="a" style="left:961px;top:245px;width:292px;height:1px;background:#8c8c8c"></div>
<div class="a" style="left:961px;top:404px;width:292px;height:1px;background:#3c3c3c"></div>
<div class="a" style="left:961px;top:405px;width:292px;height:1px;background:#8c8c8c"></div>
<div class="a" style="left:961px;top:534px;width:292px;height:1px;background:#3c3c3c"></div>
<div class="a" style="left:961px;top:535px;width:292px;height:1px;background:#8c8c8c"></div>
<div class="a" style="left:961px;top:558px;width:292px;height:1px;background:#3c3c3c"></div>
<div class="a" style="left:961px;top:559px;width:292px;height:1px;background:#8c8c8c"></div>

<!-- Preview panel -->
<svg class="ico" style="left:968px;top:253px" width="10" height="9"><path d="M0.5 0.5h8l-4 8z" fill="#222"/></svg>
<div class="t" style="left:981px;top:248px;font-size:12px;letter-spacing:0.2px">Preview</div>
<div class="a" style="left:964px;top:277px;width:300px;height:120px;border:1px solid #2a2a2a;border-radius:5px;background:#e3e3e3"></div>

<!-- World panel -->
<svg class="ico" style="left:968px;top:413px" width="10" height="9"><path d="M0.5 0.5h8l-4 8z" fill="#222"/></svg>
<div class="t" style="left:981px;top:408px;font-size:12px;letter-spacing:0.2px">World</div>
<div class="a" style="left:967px;top:440px;width:14px;height:14px;border:1px solid #222;border-radius:3px;background:linear-gradient(#444,#555)"></div>
<div class="t" style="left:989px;top:438px">Paper Sky</div>
<div class="a" style="left:1068px;top:440px;width:14px;height:14px;border:1px solid #222;border-radius:3px;background:linear-gradient(#444,#555)"></div>
<div class="t" style="left:1090px;top:438px">Blend Sky</div>
<div class="a" style="left:1169px;top:440px;width:14px;height:14px;border:1px solid #222;border-radius:3px;background:linear-gradient(#444,#555)"></div>
<div class="t" style="left:1191px;top:438px">Real Sky</div>
<div class="t" style="left:971px;top:463px;letter-spacing:0.15px">Horizon Color:</div>
<div class="t" style="left:1073px;top:463px;color:#4a4a4a">Zenith Color:</div>
<div class="t" style="left:1174px;top:463px">Ambient Color:</div>
<div class="a" style="left:964px;top:482px;width:93px;height:20px;border:1px solid #222;border-radius:5px;background:#e6e6e6"></div>
<div class="a" style="left:1065px;top:482px;width:93px;height:20px;border:1px solid #222;border-radius:5px;background:#191919"></div>
<div class="a" style="left:1166px;top:482px;width:100px;height:20px;border:1px solid #222;border-radius:5px;background:#000"></div>
<div class="a" style="left:964px;top:507px;width:144px;height:20px;border:1px solid #222;border-radius:10px;background:linear-gradient(#9e9e9e,#b8b8b8)"></div>
<svg class="ico" style="left:972px;top:514px" width="4" height="7"><path d="M4 0.5L0.5 3.5 4 6.5z" fill="#6a6a6a"/></svg>
<svg class="ico" style="left:1097px;top:514px" width="4" height="7"><path d="M0 0.5l3.5 3L0 6.5z" fill="#6a6a6a"/></svg>
<div class="t" style="left:979px;top:508px;letter-spacing:0.1px">Exposure:</div>
<div class="t" style="left:1064px;top:508px">0.000</div>
<div class="a" style="left:1116px;top:507px;width:150px;height:20px;border:1px solid #222;border-radius:10px;background:linear-gradient(#9e9e9e,#b8b8b8)"></div>
<svg class="ico" style="left:1124px;top:514px" width="4" height="7"><path d="M4 0.5L0.5 3.5 4 6.5z" fill="#6a6a6a"/></svg>
<svg class="ico" style="left:1248px;top:514px" width="4" height="7"><path d="M0 0.5l3.5 3L0 6.5z" fill="#6a6a6a"/></svg>
<div class="t" style="left:1131px;top:508px">Range:</div>
<div class="t" style="left:1216px;top:508px">1.000</div>

<!-- Mist -->
<svg class="ico" style="left:969px;top:542px" width="9" height="10"><path d="M0.5 0.5l8 4.5-8 4.5z" fill="#222"/></svg>
<div class="a" style="left:981px;top:540px;width:14px;height:14px;border:1px solid #222;border-radius:3px;background:linear-gradient(#444,#555)"></div>
<div class="t" style="left:1001px;top:538px;font-size:12px;letter-spacing:0.2px">Mist</div>

<!-- Atmosphere -->
<svg class="ico" style="left:968px;top:567px" width="10" height="9"><path d="M0.5 0.5h8l-4 8z" fill="#222"/></svg>
<div class="a" style="left:981px;top:564px;width:14px;height:14px;border:1px solid #222;border-radius:3px;background:linear-gradient(#444,#555)"></div>
<div class="t" style="left:1001px;top:562px;font-size:12px;letter-spacing:0.2px">Atmosphere Media</div>
<div class="a" style="left:964px;top:591px;width:144px;height:20px;border:1px solid #444;border-radius:10px;background:#8a8a8a"></div>
<svg class="ico" style="left:972px;top:598px" width="4" height="7"><path d="M4 0L0 3.5 4 7z" fill="#777"/></svg>
<svg class="ico" style="left:1097px;top:598px" width="4" height="7"><path d="M0 0l4 3.5L0 7z" fill="#777"/></svg>
<div class="t" style="left:979px;top:592px;color:#444">Samples:</div>
<div class="t" style="left:1078px;top:592px;color:#444">35</div>
<div class="a" style="left:1116px;top:591px;width:150px;height:20px;border:1px solid #222;border-radius:5px;background:#000"></div>

<div class="a" style="left:956px;top:38px;width:1px;height:617px;background:#868686"></div>
<!-- hatches -->
<svg class="ico" style="left:957px;top:133px" width="12" height="13"><path d="M0 0L12 12.5H0z" fill="#8a8a8a"/><path d="M-0.5 0.5l13 13" stroke="#222" stroke-width="1"/><path d="M-4.5 0.5l13 13" stroke="#222" stroke-width="1"/><path d="M-8.5 0.5l13 13" stroke="#222" stroke-width="1"/></svg>

<svg class="ico" style="left:1243px;top:246px" width="10" height="11"><path d="M0.5 0.5l13 13" stroke="#909090" stroke-width="1"/><path d="M1.5 0.5l13 13" stroke="#4a4a4a" stroke-width="1"/><path d="M6.5 0.5l13 13" stroke="#909090" stroke-width="1"/><path d="M7.5 0.5l13 13" stroke="#4a4a4a" stroke-width="1"/></svg>
<svg class="ico" style="left:1243px;top:406px" width="10" height="11"><path d="M0.5 0.5l13 13" stroke="#909090" stroke-width="1"/><path d="M1.5 0.5l13 13" stroke="#4a4a4a" stroke-width="1"/><path d="M6.5 0.5l13 13" stroke="#909090" stroke-width="1"/><path d="M7.5 0.5l13 13" stroke="#4a4a4a" stroke-width="1"/></svg>
<svg class="ico" style="left:1243px;top:536px" width="10" height="11"><path d="M0.5 0.5l13 13" stroke="#909090" stroke-width="1"/><path d="M1.5 0.5l13 13" stroke="#4a4a4a" stroke-width="1"/><path d="M6.5 0.5l13 13" stroke="#909090" stroke-width="1"/><path d="M7.5 0.5l13 13" stroke="#4a4a4a" stroke-width="1"/></svg>
<svg class="ico" style="left:1243px;top:560px" width="10" height="11"><path d="M0.5 0.5l13 13" stroke="#909090" stroke-width="1"/><path d="M1.5 0.5l13 13" stroke="#4a4a4a" stroke-width="1"/><path d="M6.5 0.5l13 13" stroke="#909090" stroke-width="1"/><path d="M7.5 0.5l13 13" stroke="#4a4a4a" stroke-width="1"/></svg>
<svg class="ico" style="left:944px;top:39px" width="11" height="12"><path d="M0.5 0.5l14 14" stroke="#8a8a8a" stroke-width="1"/><path d="M1.5 0.5l14 14" stroke="#0e0e0e" stroke-width="1"/><path d="M4.5 0.5l14 14" stroke="#8a8a8a" stroke-width="1"/><path d="M5.5 0.5l14 14" stroke="#0e0e0e" stroke-width="1"/><path d="M8.5 0.5l14 14" stroke="#8a8a8a" stroke-width="1"/><path d="M9.5 0.5l14 14" stroke="#0e0e0e" stroke-width="1"/></svg>
<svg class="ico" style="left:945px;top:639px" width="10" height="12"><path d="M0.5 0.5l14 14" stroke="#7a7a7a" stroke-width="1"/><path d="M1.5 0.5l14 14" stroke="#1a1a1a" stroke-width="1"/><path d="M4.5 0.5l14 14" stroke="#7a7a7a" stroke-width="1"/><path d="M5.5 0.5l14 14" stroke="#1a1a1a" stroke-width="1"/><path d="M8.5 0.5l14 14" stroke="#7a7a7a" stroke-width="1"/><path d="M9.5 0.5l14 14" stroke="#1a1a1a" stroke-width="1"/></svg>
</body></html>
